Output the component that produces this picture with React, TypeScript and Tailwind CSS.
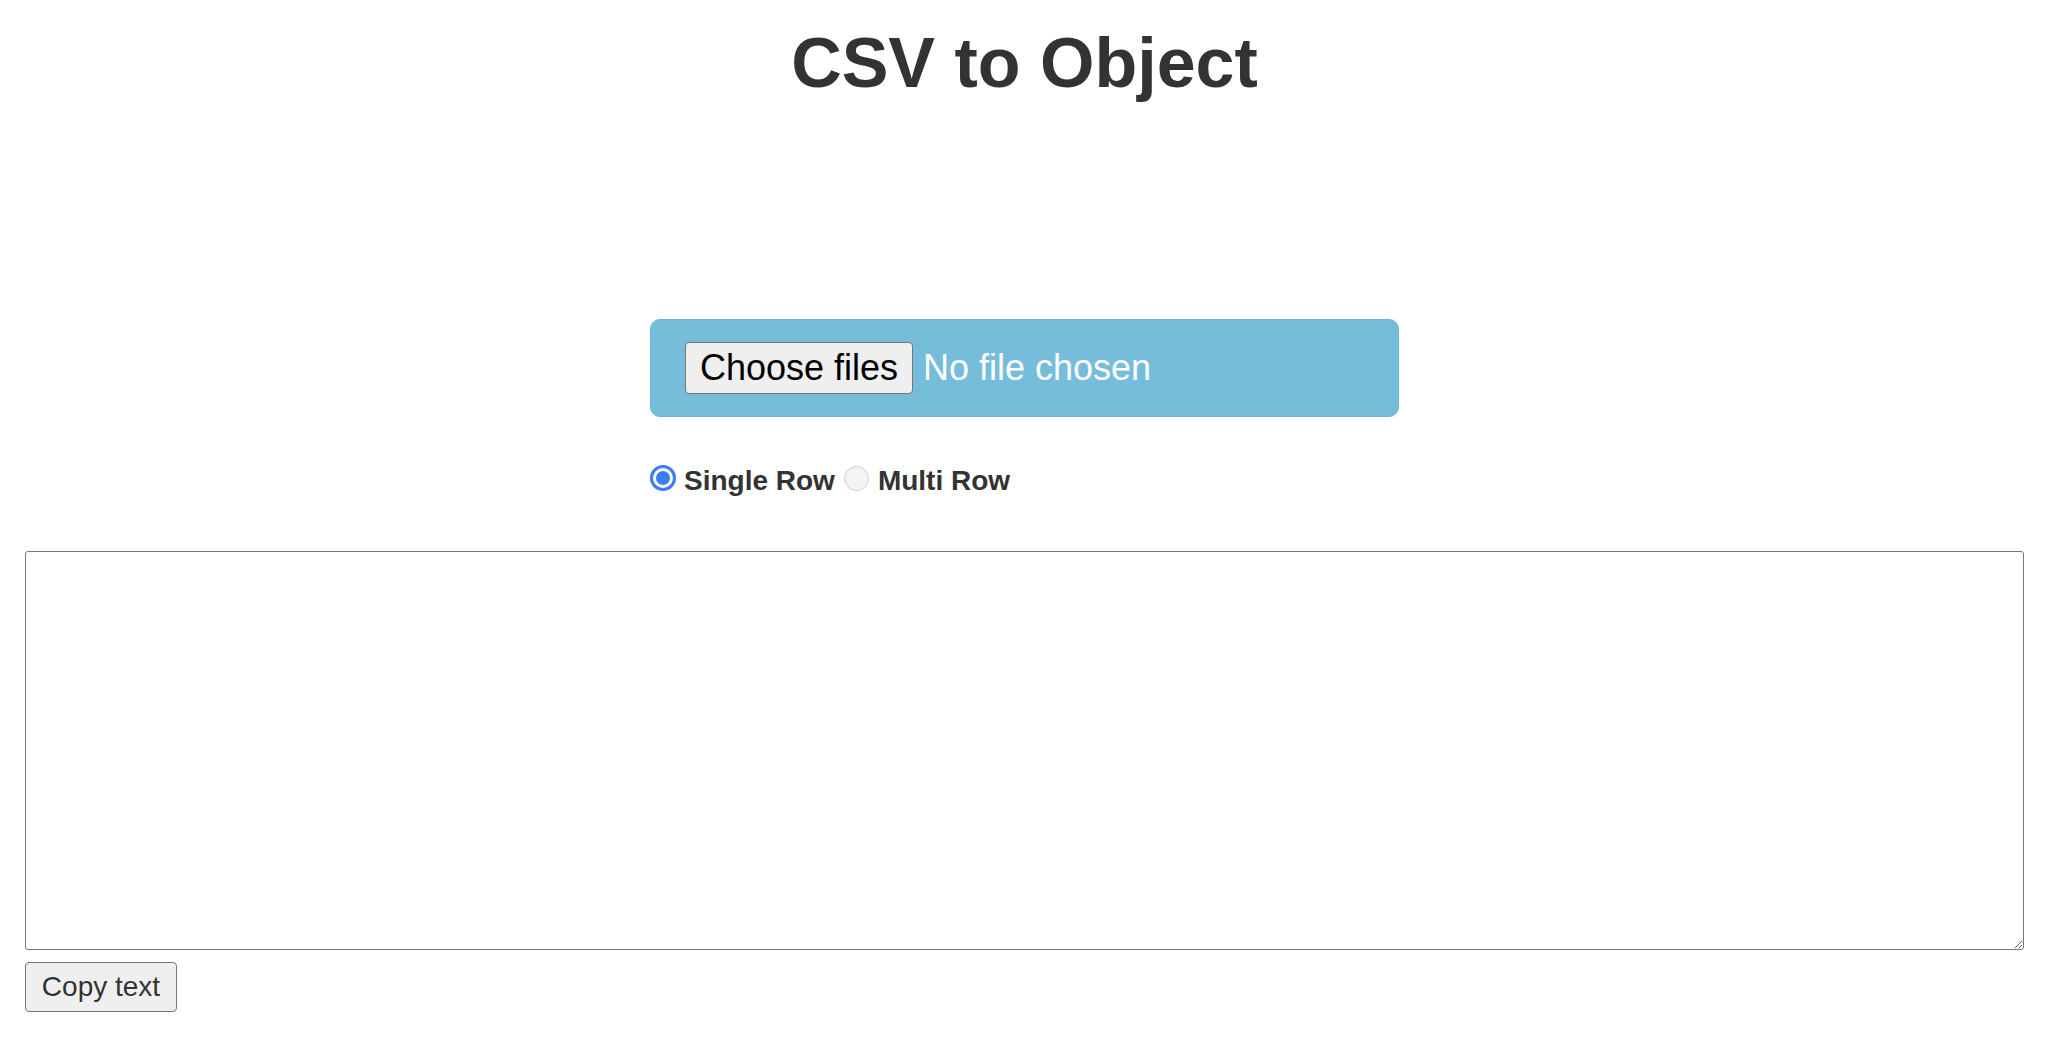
import { useState } from "react";

const App = () => {
  const [multi, setMulti] = useState(false);
  const [text, setText] = useState("");

  return (
    <div className="min-h-screen w-full bg-white font-['Liberation_Sans',Arial,sans-serif] text-[#333]">
      <div className="w-[2049px] px-[25px]">
        <h1 className="pt-[23px] text-center text-[70px] font-bold leading-[80px] text-[#333]">
          CSV to Object
        </h1>

        <div className="mx-auto mt-[216px] flex h-[98px] w-[749px] items-center rounded-[10px] border border-[#6bb6d6] bg-[#76bddb] px-[34px]">
          <label className="flex cursor-pointer items-center">
            <span className="flex h-[52px] w-[228px] items-center justify-center rounded-[4px] border border-[#767676] bg-[#efefef] text-[36px] leading-[40px] text-black">
              Choose files
            </span>
            <span className="ml-[10px] text-[36px] leading-[40px] text-white">No file chosen</span>
            <input type="file" multiple className="hidden" />
          </label>
        </div>

        <div className="mx-auto mt-[48px] flex w-[749px] items-start text-[28px] font-bold leading-[32px]">
          <button onClick={() => setMulti(false)} className="flex items-start">
            {multi ? (
              <span className="h-[26px] w-[26px] rounded-full border border-[#cfcfcf] bg-[#f4f4f4]"></span>
            ) : (
              <span className="flex h-[26px] w-[26px] items-center justify-center rounded-full border-[3px] border-[#3b7cf5] bg-white">
                <span className="h-[14px] w-[14px] rounded-full bg-[#3b7cf5]"></span>
              </span>
            )}
            <span className="ml-[8px]">Single Row</span>
          </button>
          <button onClick={() => setMulti(true)} className="ml-[9px] flex items-start">
            {multi ? (
              <span className="flex h-[26px] w-[26px] items-center justify-center rounded-full border-[3px] border-[#3b7cf5] bg-white">
                <span className="h-[14px] w-[14px] rounded-full bg-[#3b7cf5]"></span>
              </span>
            ) : (
              <span className="mt-[1px] h-[25px] w-[25px] rounded-full border border-[#cfcfcf] bg-[#f4f4f4]"></span>
            )}
            <span className="ml-[9px]">Multi Row</span>
          </button>
        </div>

        <div className="mt-[54px] flex flex-col items-start">
          <textarea
            value={text}
            onChange={(e) => setText(e.target.value)}
            className="block h-[399px] w-full resize rounded-[3px] border border-[#767676] bg-white p-[2px] text-[16px]"
          ></textarea>
          <button
            onClick={() => navigator.clipboard?.writeText(text)}
            className="mt-[12px] flex h-[50px] w-[152px] items-center justify-center rounded-[4px] border border-[#767676] bg-[#efefef] text-[28px] leading-[32px] text-[#333]"
          >
            Copy text
          </button>
        </div>
      </div>
    </div>
  );
};

export default App;
